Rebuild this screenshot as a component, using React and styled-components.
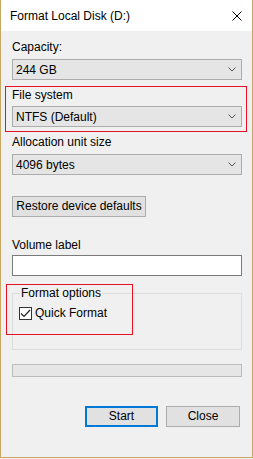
import styled, { createGlobalStyle } from 'styled-components';

const GlobalStyle = createGlobalStyle`
  html, body {
    margin: 0;
    padding: 0;
    background: #f0f0f0;
  }
  body {
    font-family: "Liberation Sans", Arial, sans-serif;
    font-size: 12px;
    color: #000;
  }
`;

const Window = styled.div`
  width: 253px;
  height: 458px;
  box-sizing: border-box;
  border: 1px solid #c7a862;
  border-top: none;
  display: flex;
  flex-direction: column;
  background: #f0f0f0;
`;

const TitleBar = styled.div`
  height: 31px;
  flex: none;
  background: #fff;
  display: flex;
  align-items: center;
  justify-content: space-between;
  padding: 0 10px 0 9px;
`;

const CloseIcon = styled.svg`
  width: 10px;
  height: 10px;
  display: block;
`;

const Body = styled.div`
  flex: 1;
  display: flex;
  flex-direction: column;
  padding: 9px 10px 0 11px;
`;

const Field = styled.div`
  position: relative;
  display: flex;
  flex-direction: column;
  gap: ${(p) => (p.$gap === undefined ? 4 : p.$gap)}px;
  margin-top: ${(p) => p.$top || 0}px;
`;

const Label = styled.div`
  line-height: 15px;
  height: 15px;
`;

const Mark = styled.div`
  position: absolute;
  border: 1px solid #e81123;
  pointer-events: none;
  left: ${(p) => p.$left}px;
  top: ${(p) => p.$top}px;
  width: ${(p) => p.$width}px;
  height: ${(p) => p.$height}px;
  box-sizing: border-box;
`;

const Combo = styled.div`
  height: 21px;
  box-sizing: border-box;
  border: 1px solid #acacac;
  background: #e5e5e5;
  display: flex;
  align-items: center;
  justify-content: space-between;
  padding: 0 5px 0 3px;
`;

const Chevron = styled.svg`
  width: 8px;
  height: 5px;
  display: block;
`;

const Button = styled.button`
  font: inherit;
  color: #000;
  height: 21px;
  box-sizing: border-box;
  background: #e1e1e1;
  border: ${(p) => (p.$primary ? '2px solid #0078d7' : '1px solid #adadad')};
  padding: 0;
  width: ${(p) => p.$width}px;
  margin-top: ${(p) => p.$top || 0}px;
  align-self: flex-start;
  line-height: 15px;
`;

const TextInput = styled.div`
  height: 21px;
  box-sizing: border-box;
  border: 1px solid #7a7a7a;
  background: #fff;
`;

const OptionsArea = styled.div`
  position: relative;
  margin-top: 10px;
`;

const GroupBox = styled.fieldset`
  margin: 0;
  padding: 5px 0 0 6px;
  height: 64px;
  box-sizing: border-box;
  border: 1px solid #dcdcdc;
`;

const Legend = styled.legend`
  padding: 0 1px;
  margin-left: 1px;
  line-height: 15px;
`;

const CheckRow = styled.label`
  display: flex;
  align-items: center;
  gap: 3px;
  line-height: 15px;
`;

const Box = styled.span`
  width: 13px;
  height: 13px;
  box-sizing: border-box;
  border: 1px solid #333;
  background: #fff;
  display: flex;
  align-items: center;
  justify-content: center;
`;

const Progress = styled.div`
  margin-top: 14px;
  height: 13px;
  box-sizing: border-box;
  border: 1px solid #bcbcbc;
  background: #e6e6e6;
`;

const Actions = styled.div`
  display: flex;
  justify-content: flex-end;
  gap: 8px;
  margin-top: 29px;
  padding-right: 2px;
`;

function Dropdown({ value }) {
  return (
    <Combo>
      <span>{value}</span>
      <Chevron viewBox="0 0 8 5">
        <path d="M0.5 0.5 L4 4 L7.5 0.5" fill="none" stroke="#555" strokeWidth="1" />
      </Chevron>
    </Combo>
  );
}

export default function App() {
  return (
    <>
      <GlobalStyle />
      <Window>
        <TitleBar>
          <span>Format Local Disk (D:)</span>
          <CloseIcon viewBox="0 0 10 10">
            <path d="M0.5 0.5 L9.5 9.5 M9.5 0.5 L0.5 9.5" stroke="#000" strokeWidth="1" />
          </CloseIcon>
        </TitleBar>
        <Body>
          <Field>
            <Label>Capacity:</Label>
            <Dropdown value="244 GB" />
          </Field>
          <Field $top={8} $gap={3}>
            <Label>File system</Label>
            <Dropdown value="NTFS (Default)" />
            <Mark $left={-7} $top={-2} $width={242} $height={46} />
          </Field>
          <Field $top={8}>
            <Label>Allocation unit size</Label>
            <Dropdown value="4096 bytes" />
          </Field>
          <Button $width={134} $top={21}>Restore device defaults</Button>
          <Field $top={21} $gap={2}>
            <Label>Volume label</Label>
            <TextInput />
          </Field>
          <OptionsArea>
            <GroupBox>
              <Legend>Format options</Legend>
              <CheckRow>
                <Box>
                  <svg width="11" height="9" viewBox="0 0 11 9">
                    <path d="M1 4.5 L4 7.5 L10 1" fill="none" stroke="#222" strokeWidth="1.2" />
                  </svg>
                </Box>
                Quick Format
              </CheckRow>
            </GroupBox>
            <Mark $left={-6} $top={-2} $width={127} $height={51} />
          </OptionsArea>
          <Progress />
          <Actions>
            <Button $primary $width={73}>Start</Button>
            <Button $width={74}>Close</Button>
          </Actions>
        </Body>
      </Window>
    </>
  );
}
